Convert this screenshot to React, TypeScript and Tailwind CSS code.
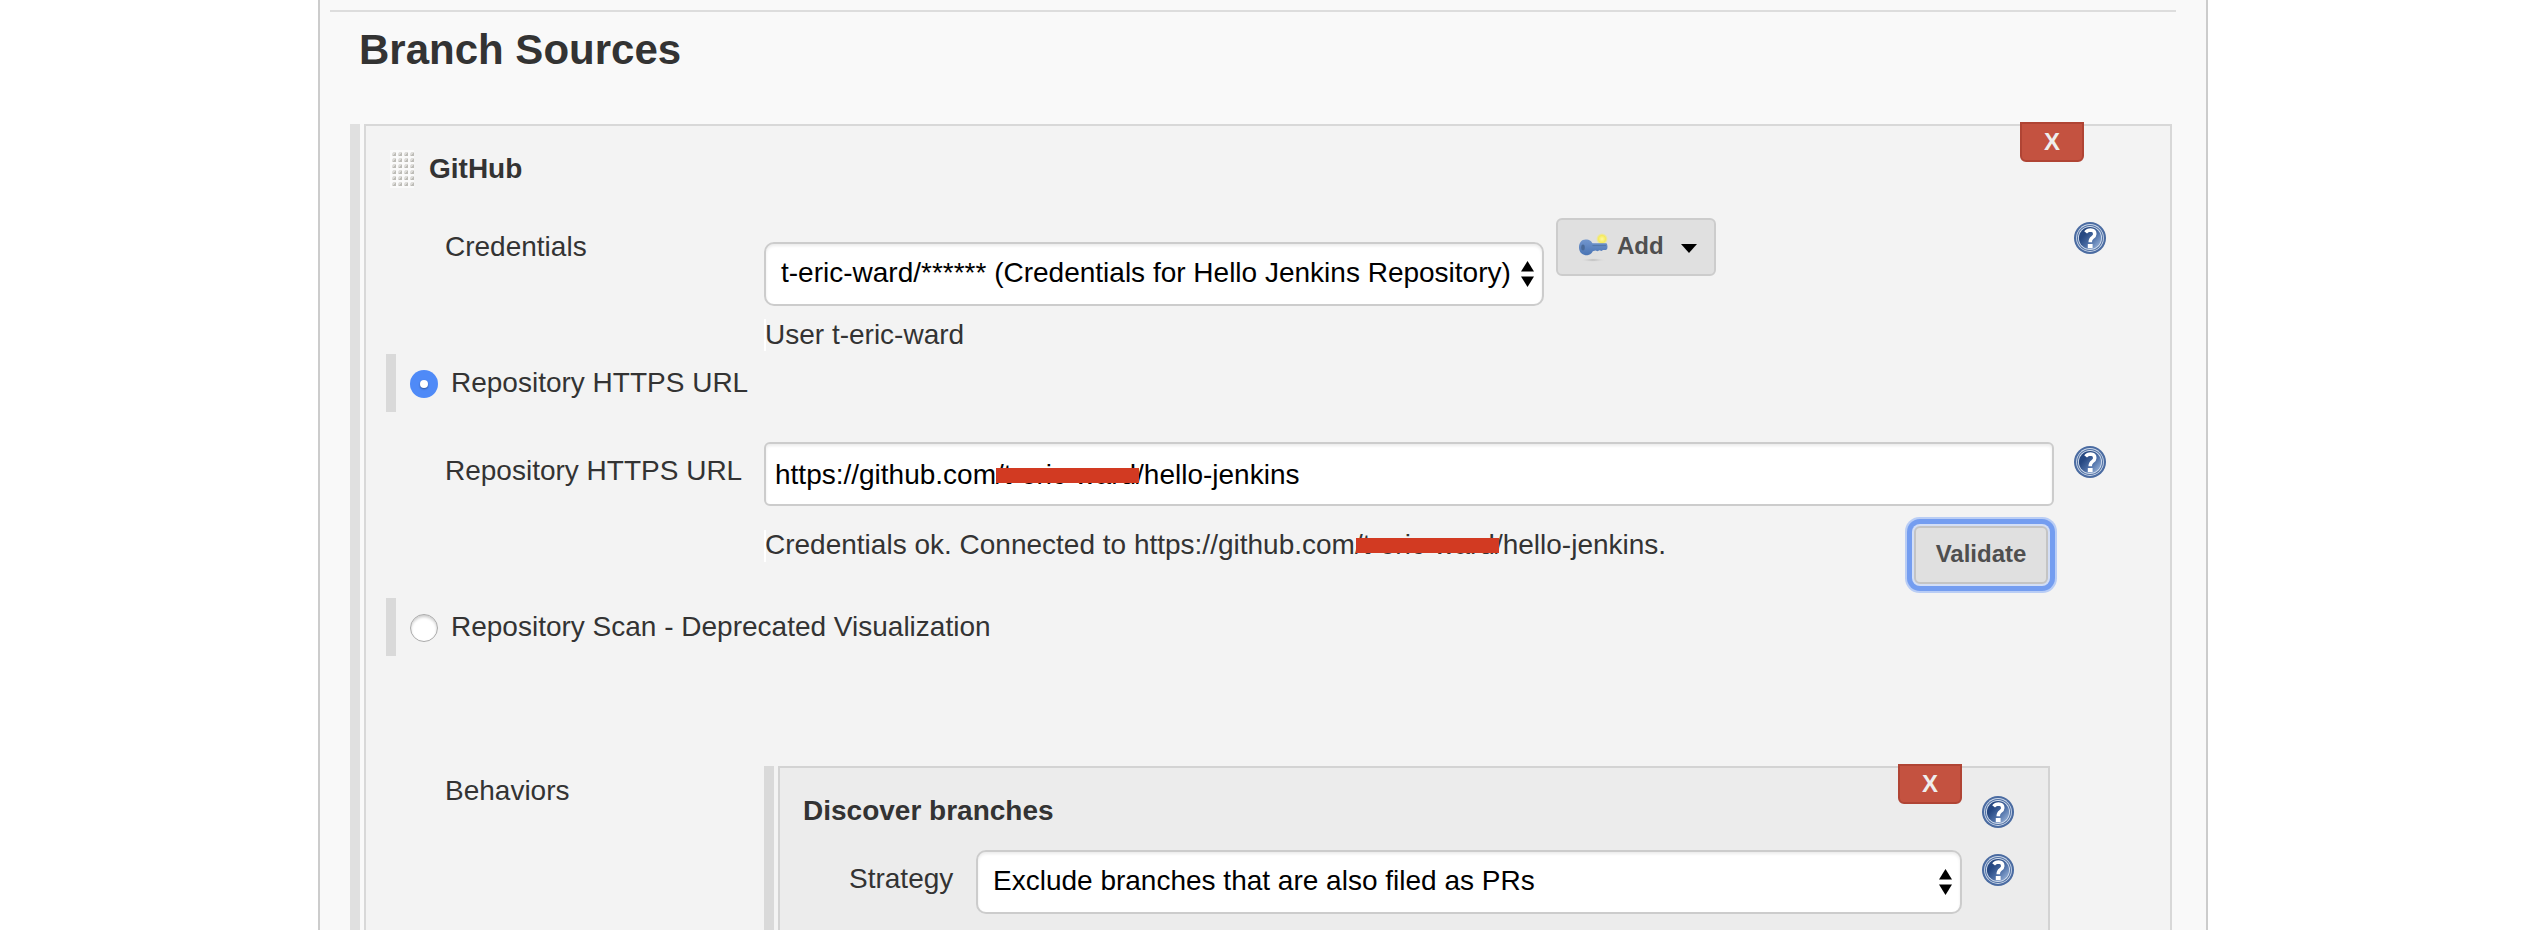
import React from "react";

function HelpIcon() {
  return (
    <svg width="32" height="32" viewBox="0 0 32 32" className="block shrink-0">
      <defs>
        <linearGradient id="help-fill" x1="0.1" y1="0.2" x2="0.9" y2="0.9">
          <stop offset="0.2" stopColor="#264882" />
          <stop offset="0.6" stopColor="#4f71a8" />
          <stop offset="1" stopColor="#93aed6" />
        </linearGradient>
      </defs>
      <circle cx="16" cy="16" r="16" fill="#4a6ba1" />
      <circle cx="16" cy="16" r="13.9" fill="#cdd9ea" />
      <circle cx="16" cy="16" r="13" fill="#4f6fa3" />
      <circle cx="16" cy="16" r="12" fill="#d3deed" />
      <circle cx="16" cy="16" r="11.1" fill="url(#help-fill)" />
      <path d="M11.6 10.4Q13.4 8 16.6 8Q20.8 8.2 20.8 12Q20.8 14 18.4 15.6Q16.3 17 16.2 20.2" fill="none" stroke="#fff" strokeWidth="3.5" />
      <rect x="13.8" y="22" width="4.8" height="4.2" fill="#fff" />
    </svg>
  );
}

function KeyIcon() {
  return (
    <svg width="32" height="32" viewBox="0 0 32 32" className="block shrink-0">
      <defs>
        <linearGradient id="key-fill" x1="0" y1="0" x2="0" y2="1">
          <stop offset="0" stopColor="#7296cd" />
          <stop offset="1" stopColor="#4a74b4" />
        </linearGradient>
        <radialGradient id="spark">
          <stop offset="0" stopColor="#fff9a0" />
          <stop offset="0.6" stopColor="#f5ea5e" />
          <stop offset="1" stopColor="#f3ea70" stopOpacity="0" />
        </radialGradient>
        <radialGradient id="key-shadow">
          <stop offset="0" stopColor="#b4b4b4" />
          <stop offset="1" stopColor="#e0e0e0" stopOpacity="0" />
        </radialGradient>
      </defs>
      <ellipse cx="16" cy="28" rx="13" ry="2" fill="url(#key-shadow)" />
      <circle cx="25" cy="7" r="6" fill="url(#spark)" />
      <path d="M8.5 7.5C13 7.5 14.5 9.6 15.5 11.3H29.5Q30.5 12.5 30.5 15Q30.5 17.5 29 18H26L24.5 19L22.5 18.2L20.5 19.2L18.5 18.6L15.8 19.2C14.5 22 12 23.4 8.5 23.2C4.5 22.8 2 19.5 2 15.3C2 11 4.5 7.5 8.5 7.5Z" fill="url(#key-fill)" />
      <ellipse cx="6" cy="15.6" rx="1.8" ry="3" fill="#4a6a98" />
      <path d="M15.5 13.6H29" stroke="#5377a8" strokeWidth="1" />
    </svg>
  );
}

function DragHandle() {
  return (
    <svg width="24" height="38" viewBox="0 0 24 38" className="block shrink-0">
      <defs>
        <pattern id="grip" x="2" y="2" width="6" height="6" patternUnits="userSpaceOnUse">
          <rect width="6" height="6" fill="#fafafa" />
          <path d="M4 0V4H0Z" fill="#bdbcb7" />
          <path d="M0 4L4 0H1.5L0 1.5Z" fill="#dddcd9" />
        </pattern>
      </defs>
      <rect width="24" height="38" fill="#fafafa" />
      <rect x="2" y="1" width="22" height="37" fill="url(#grip)" />
    </svg>
  );
}

function Spinner() {
  return (
    <svg width="13" height="26" viewBox="0 0 13 26" className="block shrink-0">
      <path d="M6.5 0L13 10.5H0Z" />
      <path d="M6.5 26L0 15.5H13Z" />
    </svg>
  );
}

function Select({ children, className }: { children: React.ReactNode; className: string }) {
  return (
    <div className={`flex h-16 shrink-0 justify-between rounded-[10px] border-2 border-[#ccc] bg-white pl-[15px] text-black shadow-[inset_0_2px_3px_rgba(0,0,0,0.08)] ${className}`}>
      <span className="pt-[13px]">{children}</span>
      <span className="pt-[17px] pr-2">
        <Spinner />
      </span>
    </div>
  );
}

function DeleteButton({ className }: { className: string }) {
  return (
    <button className={`absolute h-10 w-16 rounded-b-md border-2 border-[#b04434] bg-[#c45240] pb-[1px] text-center text-2xl leading-[35px] font-bold text-[#eee] ${className}`}>
      X
    </button>
  );
}

function Redacted({ children, bar }: { children: React.ReactNode; bar: string }) {
  return (
    <span className="relative">
      {children}
      <span className={`absolute top-[9px] h-[15px] bg-[#d23a22] ${bar}`} />
    </span>
  );
}

export default function App() {
  return (
    <div className="h-[930px] w-[2528px] overflow-hidden bg-white pl-[318px] font-['Liberation_Sans',Arial,sans-serif] text-[28px] leading-8 whitespace-nowrap text-[#333]">
      <main className="h-[930px] w-[1890px] border-x-2 border-[#ccc] bg-[#f9f9f9] pt-[10px]">
        <div className="ml-[10px] h-[2px] w-[1846px] bg-[#ddd]" />
        <h1 className="ml-[39px] h-[112px] pt-[13px] text-[42px] leading-[50px] font-bold">Branch Sources</h1>

        <section className="ml-[30px] flex gap-1">
          <div className="h-[806px] w-[10px] bg-[#e0e0e0]" />
          <div className="relative h-[820px] w-[1808px] border-2 border-[#d8d8d8] bg-[#f3f3f3]">
            <DeleteButton className="-top-1 right-[86px]" />

            <div className="flex h-[92px] gap-[15px] pt-6 pl-6">
              <DragHandle />
              <b className="pt-[3px]">GitHub</b>
            </div>

            <div className="flex h-[136px] items-start pl-[79px]">
              <div className="w-[319px] pt-[13px]">Credentials</div>
              <div className="flex w-[1310px] items-start gap-3">
                <div className="pt-6">
                  <Select className="w-[780px]">t-eric-ward/****** (Credentials for Hello Jenkins Repository)</Select>
                  <div className="mt-[14px] h-8 border-l-2 border-white">
                    <div className="-mt-px -ml-px">User t-eric-ward</div>
                  </div>
                </div>
                <button className="flex h-[58px] w-40 rounded-md border-2 border-[#ccc] bg-[#e0e0e0] pt-[12px] pl-[19px] text-2xl leading-7 font-bold text-[#4f4f4f]">
                  <KeyIcon />
                  <span className="ml-2">Add</span>
                  <svg width="16" height="9" className="mt-[12px] ml-[17px]">
                    <path d="M0 0H16L8 9Z" fill="#000" />
                  </svg>
                </button>
              </div>
              <div className="pt-1">
                <HelpIcon />
              </div>
            </div>

            <div className="ml-5 flex h-[58px]">
              <div className="w-[10px] bg-[#d9d9d9]" />
              <div className="mt-4 ml-[14px] flex size-7 items-center justify-center rounded-full bg-[#4f8af7]">
                <div className="size-2 rounded-full bg-white shadow-[0_1px_2px_rgba(0,0,0,0.4)]" />
              </div>
              <div className="ml-[13px] pt-[13px]">Repository HTTPS URL</div>
            </div>

            <div className="mt-[30px] flex h-[156px] items-start pl-[79px]">
              <div className="w-[319px] pt-[13px]">Repository HTTPS URL</div>
              <div className="w-[1310px]">
                <div className="h-16 w-[1290px] rounded-md border-2 border-[#ccc] bg-white pt-[15px] pl-[9px] text-black shadow-[inset_0_2px_3px_rgba(0,0,0,0.08)]">
                  https://github.com<Redacted bar="-right-[3px] left-0">/t-eric-ward</Redacted>/hello-jenkins
                </div>
                <div className="flex w-[1284px] items-start justify-between pt-5">
                  <div className="mt-1 h-8 border-l-2 border-white">
                    <div className="-mt-px -ml-px">
                      Credentials ok. Connected to https://github.com<Redacted bar="-right-[4px] left-[1px]">/t-eric-ward</Redacted>/hello-jenkins.
                    </div>
                  </div>
                  <button className="h-[58px] w-[134px] rounded-md border-2 border-[#c4c4c4] bg-[#e0e0e0] pb-[2px] text-2xl leading-[50px] font-bold text-[#4f4f4f] shadow-[0_0_0_2px_#d3def5,0_0_0_7px_#749df0,0_0_0_9px_#b9cdf5]">
                    Validate
                  </button>
                </div>
              </div>
              <div className="pt-1">
                <HelpIcon />
              </div>
            </div>

            <div className="ml-5 flex h-[58px]">
              <div className="w-[10px] bg-[#d9d9d9]" />
              <div className="mt-4 ml-[14px] size-7 rounded-full border border-[#aaa] bg-white shadow-[inset_0_2px_3px_rgba(0,0,0,0.2)]" />
              <div className="ml-[13px] pt-[13px]">Repository Scan - Deprecated Visualization</div>
            </div>

            <div className="mt-[110px] flex items-start pl-[79px]">
              <div className="w-[319px] pt-[9px]">Behaviors</div>
              <div className="flex gap-1">
                <div className="h-[170px] w-[10px] bg-[#d9d9d9]" />
                <div className="relative h-[180px] w-[1272px] border-2 border-[#d3d3d3] bg-[#ececec]">
                  <DeleteButton className="-top-1 right-[86px]" />
                  <div className="flex h-[82px] pl-[23px]">
                    <b className="w-[1179px] pt-[27px]">Discover branches</b>
                    <div className="pt-7">
                      <HelpIcon />
                    </div>
                  </div>
                  <div className="flex pl-[69px]">
                    <div className="w-[127px] pt-[13px]">Strategy</div>
                    <Select className="w-[986px]">Exclude branches that are also filed as PRs</Select>
                    <div className="ml-5 pt-1">
                      <HelpIcon />
                    </div>
                  </div>
                </div>
              </div>
            </div>
          </div>
        </section>
      </main>
    </div>
  );
}
